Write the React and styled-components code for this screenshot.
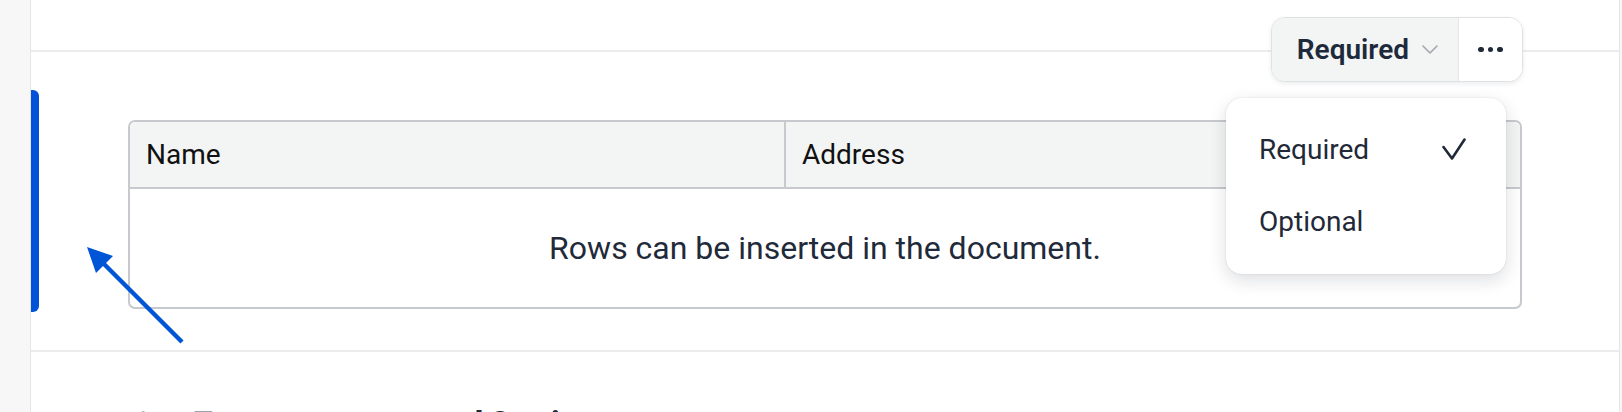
import styled, { createGlobalStyle } from 'styled-components';

const GlobalStyle = createGlobalStyle`
  html, body {
    margin: 0;
    padding: 0;
    background: #ffffff;
    overflow: hidden;
  }
  body {
    font-family: Roboto, "Noto Sans", "Liberation Sans", sans-serif;
    color: #1f2937;
  }
`;

const Page = styled.div`
  display: flex;
  width: 1622px;
  height: 412px;
  overflow: hidden;
`;

const Rail = styled.div`
  flex: none;
  background: #f7f7f7;
  width: ${(p) => (p.side === 'left' ? '30px' : '2px')};
  border-${(p) => (p.side === 'left' ? 'right' : 'left')}: 1px solid #e3e5e8;
`;

const Main = styled.main`
  flex: 1;
  display: flex;
  flex-direction: column;
  background: #ffffff;
  min-width: 0;
`;

const TopStrip = styled.div`
  flex: none;
  height: 50px;
  border-bottom: 2px solid #ececec;
`;

const Block = styled.section`
  flex: none;
  position: relative;
  display: flex;
  height: 298px;
  border-bottom: 2px solid #ececec;
`;

const SelectionBar = styled.div`
  flex: none;
  width: 8px;
  height: 222px;
  margin-top: 38px;
  background: #0052d6;
  border-radius: 0 6px 6px 0;
`;

const BlockBody = styled.div`
  flex: 1;
  padding: 68px 97px 41px 89px;
`;

const Table = styled.div`
  border: 2px solid #c6c9cd;
  border-radius: 7px;
  overflow: hidden;
`;

const HeaderRow = styled.div`
  display: grid;
  grid-template-columns: 654px 1fr;
  height: 65px;
  background: #f3f5f4;
  border-bottom: 2px solid #c6c9cd;
`;

const HeaderCell = styled.div`
  display: flex;
  align-items: center;
  padding-left: 16px;
  font-size: 28px;
  color: #111111;
  border-left: ${(p) => (p.first ? 'none' : '2px solid #c6c9cd')};
`;

const EmptyBody = styled.div`
  height: 118px;
  display: flex;
  align-items: center;
  justify-content: center;
  font-size: 32px;
  color: #1f2a3a;
`;

const Toolbar = styled.div`
  position: absolute;
  top: -35px;
  right: 96px;
  display: flex;
  height: 63px;
  border: 1px solid #dfe1e4;
  border-radius: 14px;
  overflow: hidden;
  background: #ffffff;
  box-shadow: 0 2px 5px rgba(15, 23, 42, 0.08);
`;

const SelectButton = styled.button`
  display: flex;
  align-items: center;
  gap: 13px;
  padding: 0 20px 0 25px;
  border: none;
  border-right: 1px solid #e3e5e8;
  background: #f3f4f4;
  font-family: inherit;
  font-size: 28px;
  font-weight: 600;
  color: #1e2a3b;
`;

const MoreButton = styled.button`
  width: 63px;
  display: flex;
  align-items: center;
  justify-content: center;
  gap: 4px;
  border: none;
  background: #ffffff;
`;

const Dot = styled.span`
  width: 5.5px;
  height: 5.5px;
  border-radius: 50%;
  background: #1f2937;
`;

const Menu = styled.ul`
  position: absolute;
  top: 46px;
  right: 113px;
  width: 280px;
  margin: 0;
  padding: 14px 0 18px;
  list-style: none;
  background: #ffffff;
  border-radius: 16px;
  box-shadow: 0 6px 18px rgba(15, 23, 42, 0.14), 0 0 2px rgba(15, 23, 42, 0.12);
`;

const MenuItem = styled.li`
  display: flex;
  align-items: center;
  justify-content: space-between;
  height: 72px;
  padding: 2px 40px 0 33px;
  box-sizing: border-box;
  font-size: 28px;
  color: #1f2937;
`;

const Annotation = styled.svg`
  position: absolute;
  left: 50px;
  top: 190px;
  pointer-events: none;
`;

const NextSection = styled.section`
  flex: none;
  padding: 52px 97px 0 102px;
`;

const Heading = styled.h2`
  display: flex;
  gap: 44px;
  margin: 0;
  font-size: 30px;
  font-weight: 700;
  line-height: 1.2;
  color: #1f2937;
`;

const HeadingNumber = styled.span`
  color: #9ca3af;
  font-weight: 500;
`;

const HeadingTitle = styled.span`
  color: #9ca3af;
  & b {
    color: #1f2937;
  }
`;

function Chevron() {
  return (
    <svg width="16" height="9" viewBox="0 0 16 9" fill="none">
      <path d="M1 1l7 7 7-7" stroke="#a3a8ae" strokeWidth="1.6" strokeLinecap="round" strokeLinejoin="round" />
    </svg>
  );
}

function Check() {
  return (
    <svg width="24" height="22" viewBox="0 0 24 22" fill="none">
      <path d="M1.5 9l8.5 11.5L22.5 1.5" stroke="#1f2937" strokeWidth="2.6" strokeLinecap="round" strokeLinejoin="round" />
    </svg>
  );
}

const options = ['Required', 'Optional'];

export default function App() {
  const selected = 'Required';

  return (
    <>
      <GlobalStyle />
      <Page>
        <Rail side="left" />
        <Main>
          <TopStrip />
          <Block>
            <SelectionBar />
            <BlockBody>
              <Table>
                <HeaderRow>
                  <HeaderCell first>Name</HeaderCell>
                  <HeaderCell>Address</HeaderCell>
                </HeaderRow>
                <EmptyBody>Rows can be inserted in the document.</EmptyBody>
              </Table>
            </BlockBody>

            <Toolbar>
              <SelectButton>
                {selected}
                <Chevron />
              </SelectButton>
              <MoreButton aria-label="More">
                <Dot />
                <Dot />
                <Dot />
              </MoreButton>
            </Toolbar>

            <Menu>
              {options.map((opt) => (
                <MenuItem key={opt}>
                  {opt}
                  {opt === selected && <Check />}
                </MenuItem>
              ))}
            </Menu>

            <Annotation width="110" height="110" viewBox="0 0 110 110">
              <line x1="22" y1="21" x2="101" y2="100" stroke="#0055d6" strokeWidth="4.5" />
              <polygon points="6,5 32,14 15,31" fill="#0055d6" />
            </Annotation>
          </Block>
          <NextSection>
            <Heading>
              <HeadingNumber>1</HeadingNumber>
              <HeadingTitle>
                Terms, coverage, <b>and Section</b>
              </HeadingTitle>
            </Heading>
          </NextSection>
        </Main>
        <Rail side="right" />
      </Page>
    </>
  );
}
